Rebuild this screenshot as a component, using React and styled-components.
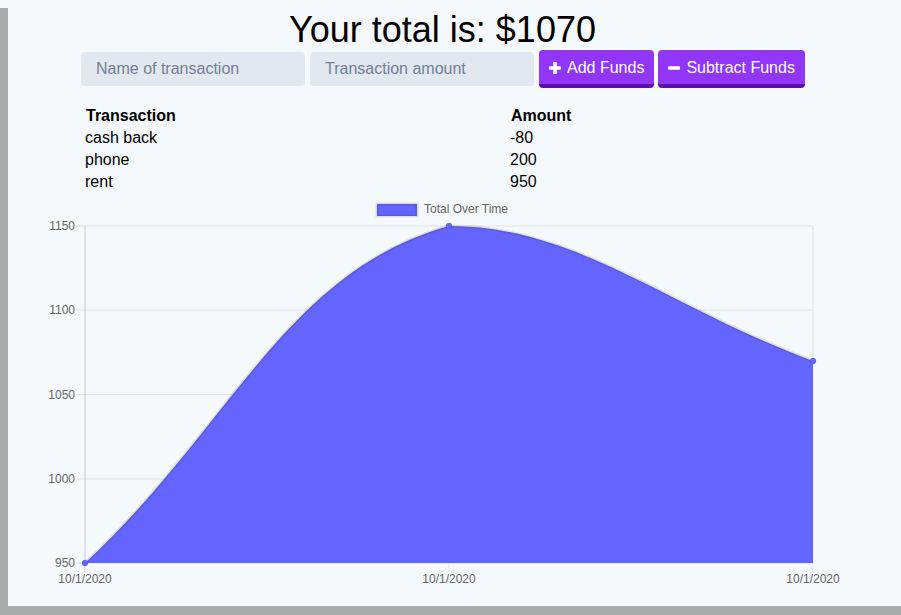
import React from "react";
import styled, { createGlobalStyle } from "styled-components";

const Global = createGlobalStyle`
  html, body { margin: 0; padding: 0; background: #f5f9fc; }
  body { font-family: "Liberation Sans", Arial, sans-serif; color: #000; }
`;

const Root = styled.div`
  background: #f5f9fc;
  padding-top: 8px;
`;

const Frame = styled.div`
  border-left: 8px solid #a9acab;
  border-bottom: 9px solid #a9acab;
  height: 598px;
  overflow: hidden;
  background: #f5f9fc;
`;

const Column = styled.div`
  width: 869px;
  display: flex;
  flex-direction: column;
  align-items: center;
`;

const Title = styled.h1`
  margin: 2px 0 0;
  font-size: 36px;
  line-height: 40px;
  font-weight: 400;
  text-align: center;
`;

const FormRow = styled.div`
  width: 723px;
  height: 38px;
  display: flex;
  align-items: center;
`;

const Input = styled.input`
  flex: none;
  box-sizing: border-box;
  width: 224px;
  height: 34px;
  margin-right: ${(p) => p.$gap}px;
  border: none;
  border-radius: 4px;
  background: #e2e8f0;
  padding: 0 15px;
  font: 16px "Liberation Sans", Arial, sans-serif;
  color: #2d3748;
  outline: none;
  &::placeholder { color: #718096; }
`;

const Button = styled.button`
  flex: none;
  white-space: nowrap;
  box-sizing: border-box;
  height: 38px;
  margin-right: ${(p) => p.$gap}px;
  display: flex;
  align-items: center;
  gap: 6px;
  padding: 2px 10px 0;
  border: none;
  border-bottom: 4px solid #5a10a8;
  border-radius: 4px;
  background: #9135f7;
  color: #fff;
  font: 16px "Liberation Sans", Arial, sans-serif;
  cursor: pointer;
`;

const Glyph = styled.svg`
  width: 12px;
  height: 12px;
  flex: none;
  fill: #fff;
`;

const PlusIcon = () => (
  <Glyph viewBox="0 0 12 12">
    <rect x="4.2" y="0" width="3.6" height="12" rx="0.8" />
    <rect x="0" y="4.2" width="12" height="3.6" rx="0.8" />
  </Glyph>
);

const MinusIcon = () => (
  <Glyph viewBox="0 0 12 12">
    <rect x="0" y="4.2" width="12" height="3.6" rx="0.8" />
  </Glyph>
);

const Table = styled.div`
  width: 723px;
  margin-top: 17px;
  display: grid;
  grid-template-columns: 425px 1fr;
  font-size: 16px;
  line-height: 22px;
`;

const Cell = styled.div`
  padding-left: ${(p) => (p.$head ? 5 : 4)}px;
  font-weight: ${(p) => (p.$head ? 700 : 400)};
`;

const ChartSvg = styled.svg`
  display: block;
  flex: none;
  align-self: flex-start;
  font-family: "Liberation Sans", Arial, sans-serif;
`;

const rows = [
  ["cash back", "-80"],
  ["phone", "200"],
  ["rent", "950"],
];

const yTicks = [
  [1150, 226],
  [1100, 310],
  [1050, 394.5],
  [1000, 479],
  [950, 563],
];
const xTicks = [85, 449, 813];
const points = [
  [85, 563],
  [449, 226],
  [813, 361],
];
const FILL = "#6464ff";

function Chart() {
  const curve =
    "M85,563 C230.6,428.2 285.6,271.3 449,226 C576.8,226 667.4,307 813,361";
  return (
    <ChartSvg width="893" height="413" viewBox="8 193 893 413">
      <rect x="377" y="204" width="40" height="12" fill={FILL} stroke="rgba(0,0,0,0.1)" strokeWidth="3" />
      <text x="424" y="213" fontSize="12" fill="#666">Total Over Time</text>

      {yTicks.map(([v, y]) => (
        <g key={v}>
          <line x1="76" x2="813" y1={y} y2={y} stroke="#dfe2e5" strokeWidth="1" />
          <text x="75" y={y + 4} fontSize="12" fill="#666" textAnchor="end">{v}</text>
        </g>
      ))}
      {xTicks.map((x, i) => (
        <g key={x}>
          <line x1={x} x2={x} y1="226" y2="572" stroke={i === 0 ? "#c9ccd0" : "#dfe2e5"} strokeWidth="1" />
          <text x={x} y="583" fontSize="12" fill="#666" textAnchor="middle">10/1/2020</text>
        </g>
      ))}

      <path d={`${curve} L813,563 L85,563 Z`} fill={FILL} />
      <path d={curve} fill="none" stroke="rgba(0,0,0,0.1)" strokeWidth="3" />
      {points.map(([x, y]) => (
        <circle key={x} cx={x} cy={y} r="3" fill={FILL} stroke="rgba(0,0,0,0.1)" strokeWidth="1" />
      ))}
    </ChartSvg>
  );
}

export default function App() {
  return (
    <Root>
      <Global />
      <Frame>
        <Column>
          <Title>Your total is: $1070</Title>
          <FormRow>
            <Input $gap={5} placeholder="Name of transaction" />
            <Input $gap={5} placeholder="Transaction amount" />
            <Button $gap={4}>
              <PlusIcon />
              Add Funds
            </Button>
            <Button $gap={0}>
              <MinusIcon />
              Subtract Funds
            </Button>
          </FormRow>
          <Table>
            <Cell $head>Transaction</Cell>
            <Cell $head>Amount</Cell>
            {rows.map(([n, a]) => (
              <React.Fragment key={n}>
                <Cell>{n}</Cell>
                <Cell>{a}</Cell>
              </React.Fragment>
            ))}
          </Table>
          <Chart />
        </Column>
      </Frame>
    </Root>
  );
}
